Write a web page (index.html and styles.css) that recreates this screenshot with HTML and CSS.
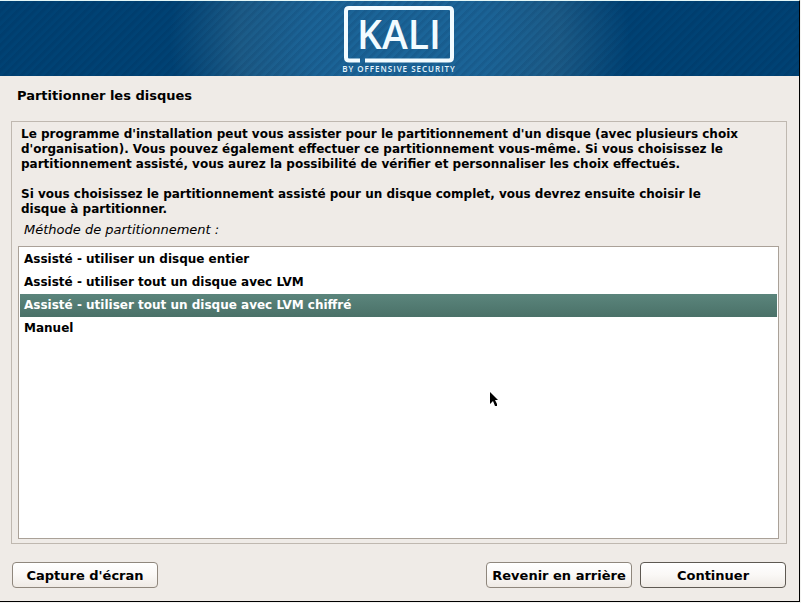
FILE: index.html
```
<!DOCTYPE html>
<html lang="fr">
  <head>
    <meta charset="UTF-8" />
    <meta name="viewport" content="width=device-width, initial-scale=1.0" />
    <title>Partitionner les disques</title>
    <link rel="stylesheet" href="styles.css">
  </head>
  <body>
    <div class="screen">
      <header class="banner">
        <svg class="logo" width="124" height="70" viewBox="-6 0 124 70" role="img" aria-label="Kali by Offensive Security">
          <path class="logo-frame" d="M17 54.5H6Q3 54.5 3 51.5V5Q3 2 6 2H106Q109 2 109 5V51.5Q109 54.5 106 54.5H22" />
          <text class="logo-name" x="56" y="43" text-anchor="middle">KALI</text>
          <text class="logo-tag" x="56" y="66" text-anchor="middle">BY OFFENSIVE SECURITY</text>
        </svg>
      </header>

      <form class="installer">
        <h1>Partitionner les disques</h1>

        <div class="panel">
          <p>Le programme d'installation peut vous assister pour le partitionnement d'un disque (avec plusieurs choix d'organisation). Vous pouvez également effectuer ce partitionnement vous-même. Si vous choisissez le partitionnement assisté, vous aurez la possibilité de vérifier et personnaliser les choix effectués.</p>
          <p>Si vous choisissez le partitionnement assisté pour un disque complet, vous devrez ensuite choisir le disque à partitionner.</p>
          <label for="method">Méthode de partitionnement :</label>
          <select id="method" class="methods" size="4">
            <option>Assisté - utiliser un disque entier</option>
            <option>Assisté - utiliser tout un disque avec LVM</option>
            <option selected>Assisté - utiliser tout un disque avec LVM chiffré</option>
            <option>Manuel</option>
          </select>
        </div>

        <div class="buttons">
          <button type="button">Capture d'écran</button>
          <button type="button" class="back">Revenir en arrière</button>
          <button type="button" class="default">Continuer</button>
        </div>
      </form>
    </div>

    <!-- Mouse pointer -->
    <svg class="pointer" width="10" height="16" viewBox="0 0 10 16" aria-hidden="true">
      <path d="M0 0V12L3 9L5 14H7V12L5 8H8Z" />
    </svg>
  </body>
</html>
```

FILE: styles.css
```
* {
  margin: 0;
  padding: 0;
  box-sizing: border-box;
}

body {
  font-family: "DejaVu Sans", Verdana, sans-serif;
  font-size: 13px;
  font-weight: bold;
  line-height: 15px;
  color: #000;
  background-color: #f3f3f1;
  padding: 0 1px 1px 0;
}

.screen {
  min-height: calc(100vh - 1px);
  display: flex;
  flex-direction: column;
  background-color: #efebe7;
  border-top: 1px solid #e4f7f7;
  border-right: 1px solid #000;
  border-bottom: 1px solid #000;
}

.banner {
  height: 75px;
  padding: 5px 2px 0 0;
  text-align: center;
  background:
    repeating-linear-gradient(135deg, rgba(0, 25, 60, 0.1) 0, rgba(0, 25, 60, 0.1) 2px, transparent 4px, transparent 6px),
    radial-gradient(ellipse 230px 180px at center, #1b6599 0, #1b6396 40%, #1c5b87 70%, #004274 100%);
}

.logo {
  display: inline-block;
}

.logo-frame {
  fill: none;
  stroke: #f2fbff;
  stroke-width: 4px;
}

.logo-name {
  font-family: "Open Sans", "Noto Sans", sans-serif;
  font-size: 39px;
  font-weight: 600;
  fill: #f2fbff;
}

.logo-tag {
  font-family: "Open Sans", "Noto Sans", sans-serif;
  font-size: 8px;
  font-weight: 600;
  letter-spacing: 1px;
  fill: #e4f4fc;
}

.installer {
  flex: 1;
  display: flex;
  flex-direction: column;
  padding: 12px 12px 13px 11px;
}

h1 {
  font-size: 13px;
  line-height: 15px;
  padding-left: 6px;
}

.panel {
  flex: 1;
  display: flex;
  flex-direction: column;
  margin-top: 18px;
  padding: 5px 7px 4px 6px;
  border: 1px solid #bfb8b0;
}

.panel p {
  padding: 0 36px 0 3px;
  margin-bottom: 15px;
  font-size: 12px;
}

.panel p + p {
  margin-bottom: 5px;
}

.panel label {
  padding-left: 6px;
  margin-bottom: 9px;
  font-weight: normal;
  font-style: italic;
}

.methods {
  flex: 1;
  padding: 1px;
  font: inherit;
  color: #000;
  background-color: #fff;
  border: 1px solid #aaa198;
  border-radius: 0;
  outline: none;
}

.methods option {
  min-height: 23px;
  padding: 4px;
  font-size: 12px;
  font-weight: bold;
  line-height: 15px;
}

.methods option:checked {
  color: #fff;
  background: linear-gradient(#5b857c, #4a7168);
}

.buttons {
  display: flex;
  gap: 8px;
  margin-top: 18px;
  padding: 0 1px;
}

.buttons button {
  width: 146px;
  height: 26px;
  font: inherit;
  color: #000;
  background: linear-gradient(#fff, #faf8f6 50%, #efeae5);
  border: 1px solid #8f877d;
  border-radius: 4px;
}

.buttons .back {
  margin-left: auto;
}

.buttons .default {
  border-color: #5e5952;
}

.pointer {
  position: absolute;
  left: 490px;
  top: 392px;
}
```
